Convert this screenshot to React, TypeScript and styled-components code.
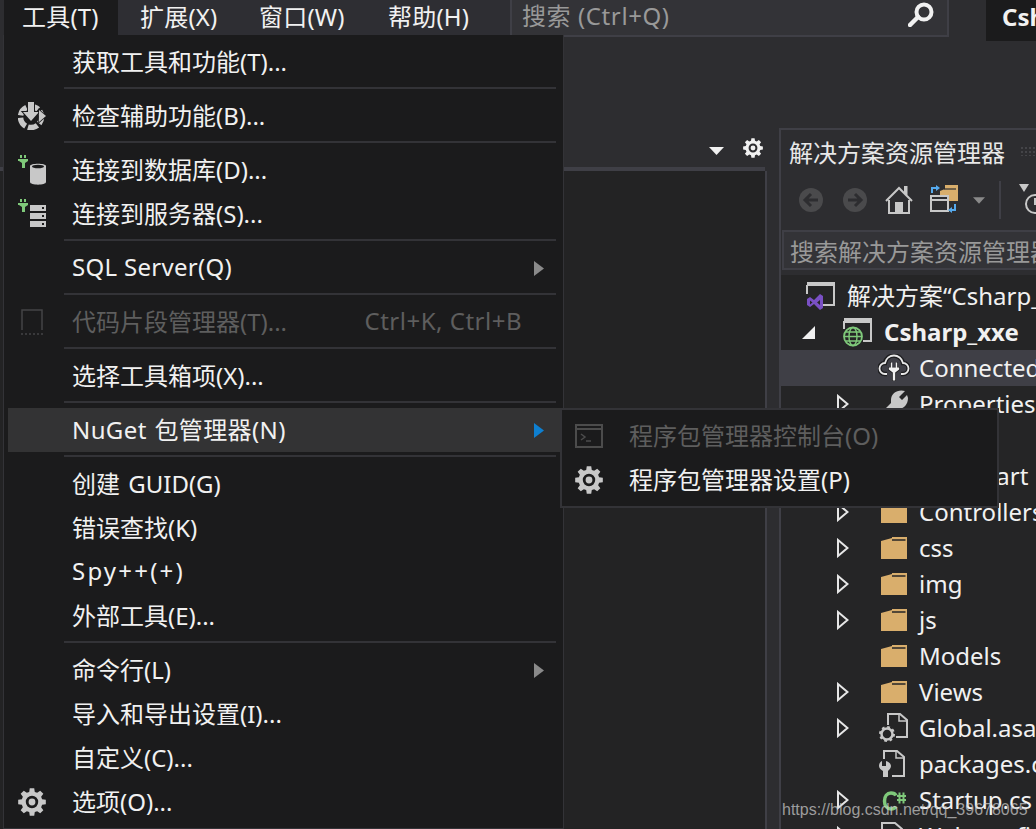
import React, { ReactNode } from 'react';
import styled, { createGlobalStyle } from 'styled-components';

const GlobalStyle = createGlobalStyle`
  html, body {
    margin: 0;
    padding: 0;
    background: #2d2d30;
  }
  body {
    font-family: "Noto Sans", "Noto Sans CJK SC", sans-serif;
    font-size: 24px;
    color: #f1f1f1;
  }
`;

const Screen = styled.div`
  position: relative;
  width: 1036px;
  height: 829px;
  overflow: hidden;
  background: #2d2d30;
  display: flex;
  flex-direction: column;
`;

const TopBar = styled.header`
  display: flex;
  align-items: flex-start;
  height: 41px;
  flex-shrink: 0;
  padding-left: 4px;
`;

const BarTab = styled.div<{ $w: number; $active?: boolean }>`
  width: ${p => p.$w}px;
  height: 35px;
  line-height: 33px;
  padding-left: ${p => (p.$active ? 18 : 22)}px;
  box-sizing: border-box;
  white-space: nowrap;
  letter-spacing: 0.2px;
  background: ${p => (p.$active ? '#1b1b1c' : '#2e2e33')};
`;

const SearchBox = styled.div`
  width: 439px;
  height: 37px;
  box-sizing: border-box;
  display: flex;
  align-items: center;
  justify-content: space-between;
  padding: 0 13px 6px 10px;
  background: #333337;
  border-left: 2px solid #3f3f46;
  border-right: 2px solid #3f3f46;
  border-bottom: 2px solid #3f3f46;
  color: #999999;
  letter-spacing: 0.6px;
`;

const TitleTab = styled.div`
  margin-left: 37px;
  width: 50px;
  height: 41px;
  line-height: 33px;
  padding-left: 16px;
  box-sizing: border-box;
  overflow: hidden;
  font-weight: 700;
  background: #1b1b1c;
  white-space: nowrap;
`;

const Workspace = styled.main`
  flex: 1;
  display: flex;
  min-height: 0;
`;

const DocColumn = styled.section`
  width: 767px;
  margin-right: 12px;
  flex-shrink: 0;
  display: flex;
  flex-direction: column;
`;

const DocStrip = styled.div`
  height: 130px;
  box-sizing: border-box;
  display: flex;
  justify-content: flex-end;
  align-items: flex-end;
  gap: 19px;
  padding: 0 2px 9px 0;
  margin-right: 2px;
  border-bottom: 4px solid #3f3f46;
`;

const StripCaret = styled.span`
  display: flex;
  margin-bottom: 3px;
`;

const DocBody = styled.div`
  flex: 1;
  background: #232324;
  border-right: 2px solid #3f3f46;
`;

const Panel = styled.aside`
  flex: 1;
  margin-top: 87px;
  min-width: 0;
  border-top: 2px solid #3f3f46;
  border-left: 2px solid #3f3f46;
  display: flex;
  flex-direction: column;
`;

const PanelTitle = styled.div`
  height: 40px;
  flex-shrink: 0;
  display: flex;
  align-items: center;
  padding: 2px 0 0 8px;
  box-sizing: border-box;
  white-space: nowrap;
  color: #e8e8e8;
`;

const Grip = styled.span`
  width: 18px;
  height: 10px;
  margin-left: 15px;
  flex-shrink: 0;
  background-image: radial-gradient(#444448 1px, transparent 1.2px);
  background-size: 4px 4px;
`;

const Toolbar = styled.div`
  height: 60px;
  flex-shrink: 0;
  display: flex;
  align-items: center;
  padding-left: 8px;
`;

const ToolSlot = styled.span<{ $w: number }>`
  width: ${p => p.$w}px;
  flex-shrink: 0;
  display: flex;
  justify-content: center;
  align-items: center;
`;

const ToolDivider = styled.span`
  width: 2px;
  height: 38px;
  margin: 0 18px 0 8px;
  flex-shrink: 0;
  background: #3f3f46;
`;

const PanelSearch = styled.div`
  height: 40px;
  margin-left: 1px;
  flex-shrink: 0;
  box-sizing: border-box;
  border: 2px solid #3f3f46;
  border-right: 0;
  background: #333337;
  color: #999999;
  line-height: 39px;
  padding-left: 6px;
  white-space: nowrap;
  overflow: hidden;
`;

const Tree = styled.div`
  flex: 1;
  margin-top: 5px;
  padding-top: 3px;
  background: #252526;
  overflow: hidden;
`;

const TreeRow = styled.div<{ $indent: number; $selected?: boolean; $bold?: boolean }>`
  height: 36px;
  display: flex;
  align-items: center;
  padding-left: ${p => p.$indent}px;
  white-space: nowrap;
  font-weight: ${p => (p.$bold ? 700 : 400)};
  background: ${p => (p.$selected ? '#3f3f46' : 'transparent')};
`;

const TreeLabel = styled.span<{ $lift?: number }>`
  padding-bottom: ${p => p.$lift ?? 2}px;
`;

const ArrowSlot = styled.span`
  width: 41px;
  flex-shrink: 0;
  display: flex;
  align-items: center;
`;

const TreeIconSlot = styled.span`
  width: 41px;
  height: 36px;
  flex-shrink: 0;
  display: flex;
  align-items: center;
`;

const Menu = styled.nav`
  position: absolute;
  left: 3px;
  top: 35px;
  width: 561px;
  box-sizing: border-box;
  padding: 5px 4px 4px;
  background: #1b1b1c;
  border-left: 1px solid #333337;
  border-right: 1px solid #333337;
  border-bottom: 1px solid #333337;
`;

const MenuRow = styled.div<{ $highlight?: boolean; $disabled?: boolean }>`
  height: 44px;
  display: flex;
  align-items: center;
  white-space: nowrap;
  margin-right: -1px;
  color: ${p => (p.$disabled ? '#5e5e5e' : '#f1f1f1')};
  background: ${p => (p.$highlight ? '#333334' : 'transparent')};
`;

const MenuIcon = styled.span`
  width: 48px;
  margin-right: 16px;
  flex-shrink: 0;
  display: flex;
  justify-content: center;
  align-items: center;
`;

const MenuLabel = styled.span<{ $spacing?: number; $words?: number }>`
  flex: 1;
  padding-bottom: 4px;
  letter-spacing: ${p => p.$spacing ?? 0}px;
  word-spacing: ${p => p.$words ?? 0}px;
`;

const Shortcut = styled.span`
  padding-bottom: 4px;
  color: #5e5e5e;
  letter-spacing: 0.5px;
`;

const SubArrowSlot = styled.span`
  width: 38px;
  padding-right: 16px;
  box-sizing: border-box;
  flex-shrink: 0;
  display: flex;
  justify-content: flex-end;
`;

const MenuSeparator = styled.div`
  height: 2px;
  margin: 3px 3px 5px 56px;
  background: #333337;
`;

const SubMenu = styled.div`
  position: absolute;
  left: 560px;
  top: 408px;
  width: 439px;
  box-sizing: border-box;
  padding: 4px 0 4px;
  background: #1b1b1c;
  border: 2px solid #333337;
`;

const SubRow = styled.div<{ $disabled?: boolean }>`
  height: 44px;
  display: flex;
  align-items: center;
  padding-left: 13px;
  gap: 26px;
  white-space: nowrap;
  color: ${p => (p.$disabled ? '#5e5e5e' : '#f1f1f1')};
`;

const SubLabel = styled.span`
  padding-bottom: 4px;
`;

const Watermark = styled.div`
  position: absolute;
  left: 782px;
  top: 800px;
  font-family: "Liberation Sans", Arial, sans-serif;
  font-size: 16px;
  line-height: 20px;
  color: rgba(205, 205, 205, 0.72);
  white-space: nowrap;
`;

const GRAY = '#c8c8c8';
const DARK = '#1b1b1c';
const GREEN = '#7fc97a';
const FOLDER = '#d9ae6c';

// eight teeth, wide at the root and narrowing at the tip
const gearPath = () => {
  const pts: string[] = [];
  for (let i = 0; i < 8; i++) {
    const a = (i * Math.PI) / 4;
    const at = (r: number, d: number) =>
      `${(14 + r * Math.sin(a + d)).toFixed(2)} ${(14 - r * Math.cos(a + d)).toFixed(2)}`;
    pts.push(at(10.5, -0.27), at(14, -0.16), at(14, 0.16), at(10.5, 0.27));
  }
  return `M${pts.join('L')}Z`;
};

const Gear = ({ size = 28, color = GRAY, hole = DARK }: { size?: number; color?: string; hole?: string }) => (
  <svg width={size} height={size} viewBox="0 0 28 28">
    <path d={gearPath()} fill={color} />
    <circle cx="14" cy="14" r="4.800" fill="none" stroke={hole} strokeWidth="2.800" />
  </svg>
);

const AccessIcon = () => (
  <svg width="28" height="28" viewBox="0 0 28 28">
    <circle cx="13" cy="15" r="10.500" fill="none" stroke={GRAY} strokeWidth="5.500" strokeDasharray="10 2.500" strokeDashoffset="3" />
    <path d="M10 0h6v10h5l-8 9-8-9h5z" fill={GRAY} stroke={DARK} strokeWidth="2" paintOrder="stroke" />
    <path d="M21 8l7 6-7 6z" fill={GRAY} stroke={DARK} strokeWidth="1.500" paintOrder="stroke" />
  </svg>
);

const Plug = () => (
  <g fill={GREEN}>
    <rect x="2" y="0" width="2" height="3" />
    <rect x="6" y="0" width="2" height="3" />
    <path d="M0 4h10v2l-3 2v5H4V8L1 6H0z" />
  </g>
);

const DatabaseIcon = () => (
  <svg width="28" height="30" viewBox="0 0 28 30">
    <Plug />
    <path d="M12 11c0-3 16-3 16 0v16c0 3.500-16 3.500-16 0z" fill={GRAY} />
    <ellipse cx="20" cy="11.500" rx="6" ry="1.800" fill={DARK} />
  </svg>
);

const ServerIcon = () => (
  <svg width="28" height="30" viewBox="0 0 28 30">
    <Plug />
    {[6, 14, 22].map(y => (
      <g key={y}>
        <rect x="12" y={y} width="16" height="6" fill={GRAY} />
        <rect x="24" y={y + 2} width="2" height="2" fill={DARK} />
      </g>
    ))}
  </svg>
);

const SnippetIcon = () => (
  <svg width="24" height="28" viewBox="0 0 24 28">
    <path d="M2 22V2h20v20" fill="none" stroke="#444446" strokeWidth="1.500" />
    <path d="M1 26h22" stroke="#444446" strokeWidth="1.500" strokeDasharray="2 2" />
  </svg>
);

const ConsoleIcon = () => (
  <svg width="28" height="24" viewBox="0 0 28 24">
    <rect x="1" y="1" width="26" height="22" fill="none" stroke="#4c4c4c" strokeWidth="2" />
    <path d="M1 5h26" stroke="#4c4c4c" strokeWidth="2" />
    <path d="M6 10l4 3-4 3M11 17h5" fill="none" stroke="#4c4c4c" strokeWidth="1.500" />
  </svg>
);

const SubArrow = ({ color = '#8a8a8a' }: { color?: string }) => (
  <svg width="10" height="15" viewBox="0 0 10 15">
    <path d="M0 0l10 7.500L0 15z" fill={color} />
  </svg>
);

const SearchGlyph = () => (
  <svg width="26" height="25" viewBox="0 0 26 25">
    <circle cx="16" cy="10" r="7.500" fill="none" stroke="#f1f1f1" strokeWidth="4" />
    <path d="M10 15l-8 8" stroke="#f1f1f1" strokeWidth="4.500" strokeLinecap="round" />
  </svg>
);

const CaretDown = ({ color = '#f1f1f1', w = 15, h = 8 }: { color?: string; w?: number; h?: number }) => (
  <svg width={w} height={h} viewBox="0 0 15 8">
    <path d="M0 0h15L7.500 8z" fill={color} />
  </svg>
);

const NavCircle = ({ flip }: { flip?: boolean }) => (
  <svg width="24" height="24" viewBox="0 0 24 24">
    <circle cx="12" cy="12" r="12" fill="#4a4a4c" />
    <path
      d={flip ? 'M5 12h12M12 6l6 6-6 6' : 'M19 12H7M12 6l-6 6 6 6'}
      fill="none"
      stroke="#2d2d30"
      strokeWidth="3"
    />
  </svg>
);

const HomeIcon = () => (
  <svg width="28" height="28" viewBox="0 0 28 28">
    <path d="M1 15L14 2l6 6V1h1.500v8.500L27 15" fill="none" stroke={GRAY} strokeWidth="2" />
    <path d="M4 14v13h20V14" fill="none" stroke={GRAY} strokeWidth="2" />
    <rect x="10" y="16" width="8" height="11" fill={GRAY} />
  </svg>
);

const SyncIcon = () => (
  <svg width="28" height="31" viewBox="0 0 28 31">
    <path d="M10 6l5-2V0h13v16H10z" fill={FOLDER} />
    <path d="M14 4h12" stroke="#2d2d30" strokeWidth="1.200" />
    <rect x="1" y="11" width="17" height="15" fill="#2d2d30" stroke={GRAY} strokeWidth="2" />
    <path d="M1 15h17" stroke={GRAY} strokeWidth="2" />
    <path d="M2 8V3h5" fill="none" stroke="#55aaee" strokeWidth="2" />
    <path d="M6 0l4 3-4 3z" fill="#55aaee" />
    <path d="M25 19v6h-4" fill="none" stroke="#55aaee" strokeWidth="2" />
    <path d="M22 22l-4 3 4 3z" fill="#55aaee" />
  </svg>
);

const HistoryIcon = () => (
  <svg width="30" height="32" viewBox="0 0 30 32" style={{ flexShrink: 0 }}>
    <path d="M0 0h10L5 8z" fill={GRAY} />
    <circle cx="16" cy="20" r="9" fill="none" stroke={GRAY} strokeWidth="2" />
    <path d="M16 14v6h5" fill="none" stroke={GRAY} strokeWidth="2" />
  </svg>
);

const SolutionIcon = () => (
  <svg width="30" height="30" viewBox="0 0 30 30">
    <path d="M2 4h26v20H16" fill="none" stroke={GRAY} strokeWidth="2" />
    <rect x="1" y="1" width="28" height="3.500" fill={GRAY} />
    <path d="M1 4v9" stroke={GRAY} strokeWidth="2" />
    <path d="M1 18l3-2 4 3 6-6 3 2v12l-3 2-6-6-4 3-3-2zM4 19.500v4l2.500-2zM11 21.500l3 2.500v-5z" fill="#7a50c4" fillRule="evenodd" />
  </svg>
);

const ProjectIcon = () => (
  <svg width="30" height="30" viewBox="0 0 30 30">
    <path d="M2 4h26v20H20" fill="none" stroke={GRAY} strokeWidth="2" />
    <rect x="1" y="1" width="28" height="5" fill={GRAY} />
    <path d="M1 4v8" stroke={GRAY} strokeWidth="2" />
    <circle cx="10" cy="19.500" r="9" fill="#252526" stroke={GREEN} strokeWidth="1.800" />
    <ellipse cx="10" cy="19.500" rx="4" ry="9" fill="none" stroke={GREEN} strokeWidth="1.400" />
    <path d="M1 19.500h18M2.500 15h15M2.500 24h15" stroke={GREEN} strokeWidth="1.400" />
  </svg>
);

const CloudIcon = () => (
  <svg width="32" height="28" viewBox="0 0 32 28">
    <path
      d="M9 20H7a5.500 5.500 0 0 1 0-11c1-5 5-7.500 9-7.500s8 3 9 7.500a5.500 5.500 0 0 1 0 11h-2"
      fill="none"
      stroke="#1e1e20"
      strokeWidth="4.500"
    />
    <path
      d="M9 20H7a5.500 5.500 0 0 1 0-11c1-5 5-7.500 9-7.500s8 3 9 7.500a5.500 5.500 0 0 1 0 11h-2"
      fill="none"
      stroke="#e8e8e8"
      strokeWidth="1.800"
    />
    <path d="M12 8h2v5h4V8h2v5h2v3l-4 3v8h-4v-8l-4-3v-3h2z" fill="#1e1e20" />
    <path d="M12.800 8.500h1.400v5h3.600v-5h1.400v5h2v2l-4 3v8h-2.400v-8l-4-3v-2h2z" fill="#f1f1f1" />
  </svg>
);

const WrenchIcon = () => (
  <svg width="30" height="30" viewBox="0 0 30 30">
    <path d="M27 2C20 0 13 4 13 11v3l-5 5v11h4l6-10c7 1 12-4 12-11l-1-3-5 5-3-3z" fill={GRAY} />
  </svg>
);

const FolderIcon = () => (
  <svg width="26" height="22" viewBox="0 0 26 22" style={{ marginLeft: 3 }}>
    <path d="M0 22V4l11-3V0h15v22z" fill={FOLDER} />
    <path d="M11 3h13.500" stroke="#252526" strokeWidth="1.500" />
  </svg>
);

const GlobalIcon = () => (
  <svg width="30" height="30" viewBox="0 0 30 30">
    <path d="M10 12V1h12l7 6v17H18" fill="none" stroke={GRAY} strokeWidth="2" />
    <path d="M21 1v7h8" fill="none" stroke={GRAY} strokeWidth="1.500" />
    <g transform="translate(1,13)">
      <circle cx="8" cy="8" r="5.500" fill="none" stroke={GRAY} strokeWidth="2.500" />
      <circle cx="8" cy="8" r="7" fill="none" stroke={GRAY} strokeWidth="2" strokeDasharray="2.750 2.750" />
    </g>
  </svg>
);

const PackagesIcon = () => (
  <svg width="30" height="30" viewBox="0 0 30 30">
    <path d="M6 10V2h13l7 6v19H14" fill="none" stroke={GRAY} strokeWidth="2" />
    <path d="M18 2v7h8" fill="none" stroke={GRAY} strokeWidth="1.500" />
    <path d="M4 12v5h4v-5c3 1 5 3 5 5s-2 4-3 5v6H5v-6c-2-1-4-3-4-5s1-4 3-5z" fill={GRAY} />
  </svg>
);

const CSharpIcon = () => (
  <svg width="30" height="24" viewBox="0 -2.500 30 24">
    <path d="M18 5c-1-2-3-2.500-5-2.500-4 0-6.500 3.500-6.500 8s2.500 8 6.500 8c2 0 4-.5 5-2.500" fill="none" stroke={GREEN} strokeWidth="3.500" />
    <path d="M19 5.500h9M19 9.500h9M21.500 2v11M25.500 2v11" stroke={GREEN} strokeWidth="2" />
  </svg>
);

const FileIcon = () => (
  <svg width="30" height="30" viewBox="0 0 30 30">
    <path d="M4 28V2h13l7 6v20z" fill="none" stroke={GRAY} strokeWidth="2" />
  </svg>
);

const OpenArrow = () => (
  <svg width="13" height="13" viewBox="0 0 13 13">
    <path d="M0 13h13V0z" fill="#f1f1f1" />
  </svg>
);

const ClosedArrow = () => (
  <svg width="12" height="20" viewBox="0 0 12 20">
    <path d="M1 2l9.500 8L1 18z" fill="none" stroke="#e6e6e6" strokeWidth="2" />
  </svg>
);

type MenuEntry = {
  label: string;
  icon?: ReactNode;
  shortcut?: string;
  sub?: boolean;
  disabled?: boolean;
  highlight?: boolean;
  spacing?: number;
  words?: number;
};

const menuGroups: MenuEntry[][] = [
  [{ label: '获取工具和功能(T)...' }],
  [{ label: '检查辅助功能(B)...', icon: <AccessIcon /> }],
  [
    { label: '连接到数据库(D)...', icon: <DatabaseIcon /> },
    { label: '连接到服务器(S)...', icon: <ServerIcon /> },
  ],
  [{ label: 'SQL Server(Q)', sub: true, spacing: 0.3 }],
  [{ label: '代码片段管理器(T)...', icon: <SnippetIcon />, shortcut: 'Ctrl+K, Ctrl+B', disabled: true }],
  [{ label: '选择工具箱项(X)...' }],
  [{ label: 'NuGet 包管理器(N)', sub: true, highlight: true, words: 1, spacing: 0.4 }],
  [
    { label: '创建 GUID(G)', words: 2 },
    { label: '错误查找(K)' },
    { label: 'Spy++(+)', spacing: 2.2 },
    { label: '外部工具(E)...' },
  ],
  [
    { label: '命令行(L)', sub: true },
    { label: '导入和导出设置(I)...' },
    { label: '自定义(C)...' },
    { label: '选项(O)...', icon: <Gear /> },
  ],
];

type TreeEntry = { label: string; icon: ReactNode; expandable?: boolean; selected?: boolean };

const folder = <FolderIcon />;

const treeEntries: TreeEntry[] = [
  { label: 'Connected Services', icon: <CloudIcon />, selected: true },
  { label: 'Properties', icon: <WrenchIcon />, expandable: true },
  { label: 'bin', icon: folder },
  { label: 'App_Start', icon: folder, expandable: true },
  { label: 'Controllers', icon: folder, expandable: true },
  { label: 'css', icon: folder, expandable: true },
  { label: 'img', icon: folder, expandable: true },
  { label: 'js', icon: folder, expandable: true },
  { label: 'Models', icon: folder },
  { label: 'Views', icon: folder, expandable: true },
  { label: 'Global.asax', icon: <GlobalIcon />, expandable: true },
  { label: 'packages.config', icon: <PackagesIcon /> },
  { label: 'Startup.cs', icon: <CSharpIcon />, expandable: true },
  { label: 'Web.config', icon: <FileIcon />, expandable: true },
];

export default function App() {
  return (
    <Screen>
      <GlobalStyle />
      <TopBar>
        <BarTab $w={114} $active>工具(T)</BarTab>
        <BarTab $w={119}>扩展(X)</BarTab>
        <BarTab $w={129}>窗口(W)</BarTab>
        <BarTab $w={144}>帮助(H)</BarTab>
        <SearchBox>
          <span>搜索 (Ctrl+Q)</span>
          <SearchGlyph />
        </SearchBox>
        <TitleTab>Csharp_xxe</TitleTab>
      </TopBar>

      <Workspace>
        <DocColumn>
          <DocStrip>
            <StripCaret><CaretDown /></StripCaret>
            <Gear size={20} color="#f1f1f1" hole="#2d2d30" />
          </DocStrip>
          <DocBody />
        </DocColumn>

        <Panel>
          <PanelTitle>
            解决方案资源管理器
            <Grip />
          </PanelTitle>
          <Toolbar>
            <ToolSlot $w={44}><NavCircle /></ToolSlot>
            <ToolSlot $w={44}><NavCircle flip /></ToolSlot>
            <ToolSlot $w={44}><HomeIcon /></ToolSlot>
            <ToolSlot $w={46}><SyncIcon /></ToolSlot>
            <ToolSlot $w={24}><CaretDown color="#8a8a8a" w={12} h={7} /></ToolSlot>
            <ToolDivider />
            <HistoryIcon />
          </Toolbar>
          <PanelSearch>搜索解决方案资源管理器(Ctrl+;)</PanelSearch>
          <Tree>
            <TreeRow $indent={25}>
              <TreeIconSlot><SolutionIcon /></TreeIconSlot>
              <TreeLabel $lift={4}>解决方案“Csharp_xxe”(1 个项目，共 1 个)</TreeLabel>
            </TreeRow>
            <TreeRow $indent={21} $bold>
              <ArrowSlot><OpenArrow /></ArrowSlot>
              <TreeIconSlot><ProjectIcon /></TreeIconSlot>
              <TreeLabel>Csharp_xxe</TreeLabel>
            </TreeRow>
            {treeEntries.map(entry => (
              <TreeRow key={entry.label} $indent={56} $selected={entry.selected}>
                <ArrowSlot>{entry.expandable && <ClosedArrow />}</ArrowSlot>
                <TreeIconSlot>{entry.icon}</TreeIconSlot>
                <TreeLabel>{entry.label}</TreeLabel>
              </TreeRow>
            ))}
          </Tree>
        </Panel>
      </Workspace>

      <Menu>
        {menuGroups.map((group, i) => (
          <React.Fragment key={i}>
            {i > 0 && <MenuSeparator />}
            {group.map(item => (
              <MenuRow key={item.label} $highlight={item.highlight} $disabled={item.disabled}>
                <MenuIcon>{item.icon}</MenuIcon>
                <MenuLabel $spacing={item.spacing} $words={item.words}>{item.label}</MenuLabel>
                {item.shortcut && <Shortcut>{item.shortcut}</Shortcut>}
                <SubArrowSlot>
                  {item.sub && <SubArrow color={item.highlight ? '#0e7fd0' : '#8a8a8a'} />}
                </SubArrowSlot>
              </MenuRow>
            ))}
          </React.Fragment>
        ))}
      </Menu>

      <SubMenu>
        <SubRow $disabled>
          <ConsoleIcon />
          <SubLabel>程序包管理器控制台(O)</SubLabel>
        </SubRow>
        <SubRow>
          <Gear />
          <SubLabel>程序包管理器设置(P)</SubLabel>
        </SubRow>
      </SubMenu>

      <Watermark>https://blog.csdn.net/qq_39678065</Watermark>
    </Screen>
  );
}
